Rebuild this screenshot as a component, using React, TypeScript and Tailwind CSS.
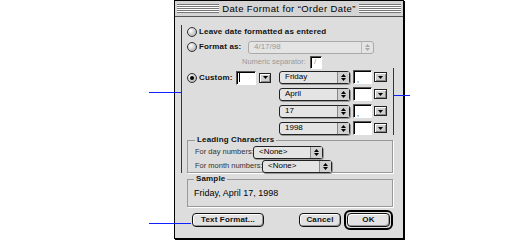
import React from 'react';

const bold = "font-['Liberation_Sans',Arial,sans-serif] font-bold tracking-[0.15px] text-[#111]";
const plain = "font-['Liberation_Sans',Arial,sans-serif]";

function Radio({ on = false }: { on?: boolean }) {
    return (
        <span className="flex size-[10px] shrink-0 items-center justify-center rounded-full border border-[#333] bg-[radial-gradient(circle_at_35%_35%,#ffffff_0%,#bbbbbb_70%,#888888_100%)]">
            {on && <span className="size-[4px] rounded-full bg-black" />}
        </span>
    );
}

function UpDown({ dim = false }: { dim?: boolean }) {
    const c = dim ? '#aaa' : '#000';
    return (
        <svg width="5" height="7" viewBox="0 0 5 7">
            <path d="M2.5 0 L5 3 L0 3 Z" fill={c} />
            <path d="M0 4 L5 4 L2.5 7 Z" fill={c} />
        </svg>
    );
}

function Popup({ label, w, dim = false }: { label: string; w: string; dim?: boolean }) {
    return (
        <div
            className={`flex h-[13px] ${w} items-center rounded-[3px] border ${dim ? 'border-[#aaa] text-[#999]' : 'border-[#222] text-black shadow-[1px_1px_0_#999]'} bg-[#e4e4e4]`}
        >
            <span className={`${plain} flex-1 truncate pl-[5px] text-[8px] leading-none`}>{label}</span>
            <span className={`flex h-full w-[12px] items-center justify-center border-l ${dim ? 'border-[#bbb]' : 'border-[#888] bg-[#d0d0d0]'}`}>
                <UpDown dim={dim} />
            </span>
        </div>
    );
}

function TextBox({ w, h = 'h-[14px]', children }: { w: string; h?: string; children?: React.ReactNode }) {
    return (
        <div className={`${w} ${h} flex items-center border border-[#555] border-r-white border-b-white bg-white shadow-[inset_1px_1px_0_#000]`}>
            {children}
        </div>
    );
}

function DropBtn({ w = 'w-[13px]' }: { w?: string }) {
    return (
        <div className={`flex h-[10px] ${w} items-center justify-center border border-[#222] bg-[#cfcfcf] shadow-[inset_1px_1px_0_#fff,inset_-1px_-1px_0_#888]`}>
            <svg width="5" height="3" viewBox="0 0 5 3">
                <path d="M0 0 L5 0 L2.5 3 Z" fill="#000" />
            </svg>
        </div>
    );
}

function Stripes() {
    return (
        <div className="h-[9px] flex-1 bg-[repeating-linear-gradient(to_bottom,#777_0px,#777_1px,#ffffff_1px,#ffffff_2px)]" />
    );
}

function Button({ label, w }: { label: string; w: string }) {
    return (
        <div
            className={`${bold} flex h-[14px] ${w} items-center justify-center rounded-[4px] border border-[#111] bg-[#e2e2e2] text-[8px] leading-none shadow-[inset_1px_1px_0_#fff,inset_-1px_-1px_0_#999]`}
        >
            {label}
        </div>
    );
}

export default function App() {
    const rows = ['Friday', 'April', '17', '1998'];
    return (
        <div className="relative h-[242px] w-[514px] overflow-hidden bg-white">
            {/* Dialog */}
            <div className="ml-[174px] flex h-[239px] w-[230px] flex-col border border-black bg-[#dddddd] shadow-[1px_1px_0_#000]">
                {/* Title bar */}
                <div className="flex h-[16px] items-center gap-[3px] border-b border-[#555] bg-[#d4d4d4] px-[2px]">
                    <Stripes />
                    <span className={`${plain} text-[9.5px] leading-none tracking-[0.4px] text-black`}>Date Format for “Order Date”</span>
                    <Stripes />
                </div>

                <div className="flex flex-1 flex-col pl-[12px] pr-[10px] pt-[9px]">
                    {/* Leave */}
                    <div className="flex h-[12px] items-center gap-[2px]">
                        <Radio />
                        <span className={`${bold} text-[8px] leading-none`}>Leave date formatted as entered</span>
                    </div>

                    {/* Format as */}
                    <div className="mt-[2px] flex h-[14px] items-center">
                        <Radio />
                        <span className={`${bold} ml-[2px] w-[49px] whitespace-nowrap text-[8px] leading-none`}>Format as:</span>
                        <Popup label="4/17/98" w="w-[126px]" dim />
                    </div>

                    {/* Numeric separator */}
                    <div className="mt-[1px] flex h-[14px] items-center">
                        <span className={`${plain} ml-[55px] w-[68px] whitespace-nowrap text-[7.5px] leading-none text-[#999]`}>Numeric separator:</span>
                        <TextBox w="w-[12px]" h="h-[13px]">
                            <span className={`${plain} pl-[3px] text-[8px] leading-none text-[#999]`}>/</span>
                        </TextBox>
                    </div>

                    {/* Custom block */}
                    <div className="mt-[1px] flex">
                        <div className="flex h-[15px] items-center">
                            <Radio on />
                            <span className={`${bold} ml-[2px] w-[37px] whitespace-nowrap text-[8px] leading-none`}>Custom:</span>
                            <TextBox w="w-[20px]">
                                <span className="ml-[2px] h-[9px] w-px bg-black" />
                            </TextBox>
                            <div className="ml-[3px]">
                                <DropBtn w="w-[12px]" />
                            </div>
                        </div>
                        <div className="ml-[8px] flex flex-col gap-[3px]">
                            {rows.map((r, i) => (
                                <div key={r} className="flex h-[14px] items-center">
                                    <Popup label={r} w="w-[71px]" />
                                    <div className="ml-[3px]">
                                        <TextBox w="w-[19px]">
                                            {(i === 0 || i === 2) && (
                                                <span className={`${plain} ml-[3px] mt-[4px] text-[7px] leading-none`}>,</span>
                                            )}
                                        </TextBox>
                                    </div>
                                    <div className="ml-[2px]">
                                        <DropBtn />
                                    </div>
                                </div>
                            ))}
                        </div>
                    </div>

                    {/* Leading characters */}
                    <fieldset className="relative mt-[1px] h-[37px] border border-[#999] px-[7px] shadow-[1px_1px_0_#fff]">
                        <legend className={`${bold} px-[2px] text-[8px] leading-none`}>Leading Characters</legend>
                        <div className="mt-[2px] flex h-[12px] items-center">
                            <span className={`${plain} w-[58px] whitespace-nowrap text-[7.5px] leading-none text-[#333]`}>For day numbers:</span>
                            <Popup label="<None>" w="w-[70px]" />
                        </div>
                        <div className="mt-[2px] flex h-[12px] items-center">
                            <span className={`${plain} w-[67px] whitespace-nowrap text-[7.5px] leading-none text-[#333]`}>For month numbers:</span>
                            <Popup label="<None>" w="w-[70px]" />
                        </div>
                    </fieldset>

                    {/* Sample */}
                    <fieldset className="mt-[2px] h-[32px] border border-[#999] px-[6px] shadow-[1px_1px_0_#fff]">
                        <legend className={`${bold} px-[2px] text-[8px] leading-none`}>Sample</legend>
                        <div className={`${plain} pt-[6px] text-[9px] leading-none`}>Friday, April 17, 1998</div>
                    </fieldset>

                    {/* Buttons */}
                    <div className="mt-[3px] flex items-center">
                        <div className="ml-[5px]">
                            <Button label="Text Format..." w="w-[72px]" />
                        </div>
                        <div className="ml-[35px]">
                            <Button label="Cancel" w="w-[42px]" />
                        </div>
                        <div className="ml-[3px] rounded-[6px] border-2 border-black p-[1px]">
                            <Button label="OK" w="w-[43px]" />
                        </div>
                    </div>
                </div>
            </div>

            {/* Callout lines */}
            <div className="absolute left-[181px] top-[25px] h-[148px] w-px bg-[#1020ff]" />
            <div className="absolute left-[149px] top-[92px] h-px w-[32px] bg-[#1020ff]" />
            <div className="absolute left-[149px] top-[223px] h-px w-[42px] bg-[#1020ff]" />
            <div className="absolute left-[393px] top-[68px] h-[67px] w-px bg-[#1020ff]" />
            <div className="absolute left-[393px] top-[95px] h-px w-[17px] bg-[#1020ff]" />
        </div>
    );
}
